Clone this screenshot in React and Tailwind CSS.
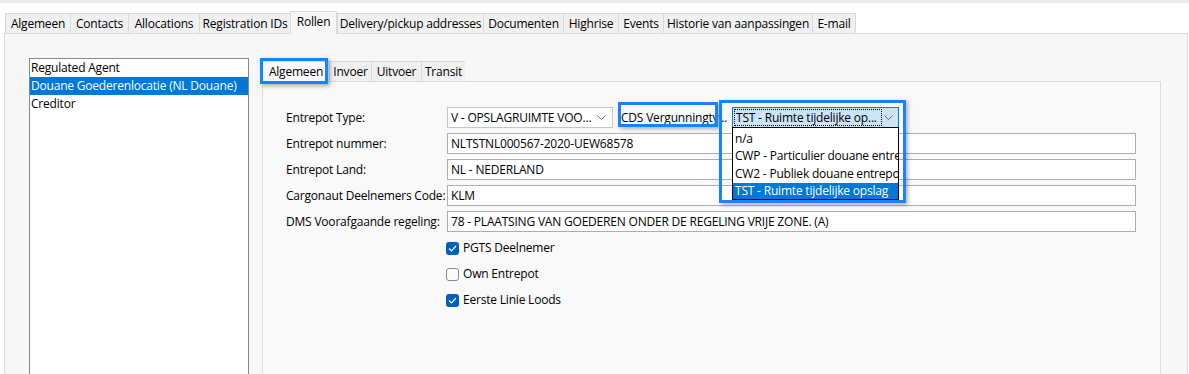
import React from 'react'

const tabs = [
  { name: 'Algemeen', w: 65 },
  { name: 'Contacts', w: 58 },
  { name: 'Allocations', w: 71 },
  { name: 'Registration IDs', w: 91 },
  { name: 'Rollen', w: 47, active: true },
  { name: 'Delivery/pickup addresses', w: 146 },
  { name: 'Documenten', w: 80 },
  { name: 'Highrise', w: 55 },
  { name: 'Events', w: 45 },
  { name: 'Historie van aanpassingen', w: 149 },
  { name: 'E-mail', w: 44 },
]

const subTabs = [
  { name: 'Algemeen', w: 67, active: true },
  { name: 'Invoer', w: 42 },
  { name: 'Uitvoer', w: 50 },
  { name: 'Transit', w: 44 },
]

const rollen = ['Regulated Agent', 'Douane Goederenlocatie (NL Douane)', 'Creditor']

const fields = [
  { label: 'Entrepot nummer:', value: 'NLTSTNL000567-2020-UEW68578' },
  { label: 'Entrepot Land:', value: 'NL - NEDERLAND' },
  { label: 'Cargonaut Deelnemers Code:', value: 'KLM' },
  { label: 'DMS Voorafgaande regeling:', value: '78 - PLAATSING VAN GOEDEREN ONDER DE REGELING VRIJE ZONE. (A)' },
]

const vergunningen = [
  'n/a',
  'CWP - Particulier douane entrepot',
  'CW2 - Publiek douane entrepot',
  'TST - Ruimte tijdelijke opslag',
]

const Chevron = () => (
  <svg width="9" height="6" viewBox="0 0 9 6" className="shrink-0">
    <polyline points="0.5,0.5 4.5,4.5 8.5,0.5" fill="none" stroke="#6b6b6b" strokeWidth="1" />
  </svg>
)

const CheckBox = ({ checked, label }) => (
  <div className="flex items-center h-[26px]">
    {checked ? (
      <div className="w-[13px] h-[13px] rounded-[3px] bg-[#005fb8] flex items-center justify-center">
        <svg width="9" height="7" viewBox="0 0 9 7">
          <polyline points="1,3.5 3.5,6 8,1" fill="none" stroke="white" strokeWidth="1.2" />
        </svg>
      </div>
    ) : (
      <div className="w-[13px] h-[13px] rounded-[3px] border border-[#8a8a8a] bg-[#fbfbfb]" />
    )}
    <span className="ml-[4px]">{label}</span>
  </div>
)

const App = () => {
  return (
    <div className="w-[1189px] h-[374px] overflow-hidden bg-white font-['Open_Sans',sans-serif] text-[12px] leading-none text-black tracking-[-0.2px]">
      <div className="h-[3px] bg-[#ececec]" />
      <div className="flex items-end h-[30px] pl-[5px]">
        {tabs.map((t, i) => (
          <div
            key={t.name}
            style={{ width: t.w }}
            className={
              t.active
                ? 'relative z-10 h-[23px] -mb-px bg-[#f7f7f7] border border-b-0 border-[#d9d9d9] flex items-start pt-[4px] justify-center whitespace-nowrap'
                : `h-[20px] bg-[#f0f0f0] border-t border-l ${i === tabs.length - 1 ? 'border-r' : ''} border-[#d9d9d9] flex items-center justify-center whitespace-nowrap`
            }
          >
            {t.name}
          </div>
        ))}
      </div>
      <div className="ml-[4px] w-[1184px] h-[400px] bg-[#f7f7f7] border border-[#dadada] flex pl-[24px] pt-[24px]">
        <div className="w-[220px] h-[400px] bg-white border border-[#828790] shrink-0">
          {rollen.map((r, i) => (
            <div
              key={r}
              className={`h-[18px] flex items-center px-[1px] whitespace-nowrap ${i === 1 ? 'bg-[#0078d7] text-white' : ''}`}
            >
              {r}
            </div>
          ))}
        </div>
        <div className="ml-[13px] pt-[3px] flex flex-col">
          <div className="relative flex h-[20px]">
            {subTabs.map((t) => (
              <div
                key={t.name}
                style={{ width: t.w }}
                className={`h-[20px] border-t border-l border-r-0 border-[#d9d9d9] flex items-center justify-center ${t.active ? 'bg-[#f9f9f9]' : 'bg-[#f0f0f0]'} last:border-r`}
              >
                {t.name}
              </div>
            ))}
            <div className="absolute left-[-2px] top-[-3px] w-[68px] h-[26px] border-[3px] border-[#1684ff] shadow-[2px_2px_4px_rgba(0,0,0,0.3)]" />
          </div>
          <div className="w-[899px] h-[300px] bg-[#f9f9f9] border border-[#dadada] pl-[23px] pt-[25px] flex flex-col gap-[5px]">
            <div className="flex items-center h-[21px]">
              <div className="w-[161px] shrink-0">Entrepot Type:</div>
              <div className="w-[166px] h-[21px] bg-white border border-[#c6c6c6] flex items-center justify-between pl-[3px] pr-[6px] whitespace-nowrap">
                <span>V - OPSLAGRUIMTE VOO...</span>
                <Chevron />
              </div>
              <div className="relative ml-[8px] w-[111px] h-[21px] flex items-center whitespace-nowrap">
                <span>CDS Vergunningty...</span>
                <div className="absolute left-[-3px] top-[-5px] w-[100px] h-[25px] border-[3px] border-[#1684ff] shadow-[2px_2px_4px_rgba(0,0,0,0.3)]" />
              </div>
              <div className="relative w-[167px] h-[21px]">
                <div className="absolute left-[-13px] top-[-7px] w-[187px] h-[103px] border-[3px] border-[#1684ff] shadow-[2px_2px_4px_rgba(0,0,0,0.3)] z-10" />
                <div className="w-full h-[21px] bg-[#cce4f7] border border-[#0078d7] flex items-center justify-between pl-[1px] pr-[5px] whitespace-nowrap">
                  <span className="border border-dotted border-black px-[1px] h-[17px] flex items-center w-[148px]">TST - Ruimte tijdelijke op...</span>
                  <Chevron />
                </div>
                <div className="absolute left-0 top-[20px] w-[167px] h-[73px] bg-white border border-black z-20 overflow-hidden pt-[2px]">
                  {vergunningen.map((v, i) => (
                    <div
                      key={v}
                      className={`h-[17.5px] flex items-center pl-[2px] whitespace-nowrap ${i === 3 ? 'bg-[#0078d7] text-white' : ''}`}
                    >
                      {v}
                    </div>
                  ))}
                </div>
              </div>
            </div>
            {fields.map((f) => (
              <div key={f.label} className="flex items-center h-[21px]">
                <div className="w-[161px] shrink-0 whitespace-nowrap">{f.label}</div>
                <div className="w-[689px] h-[21px] bg-white border border-[#adadad] flex items-center pl-[3px] whitespace-nowrap">
                  {f.value}
                </div>
              </div>
            ))}
            <div className="pl-[160px] -mt-[2px]">
              <CheckBox checked label="PGTS Deelnemer" />
              <CheckBox label="Own Entrepot" />
              <CheckBox checked label="Eerste Linie Loods" />
            </div>
          </div>
        </div>
      </div>
    </div>
  )
}

export default App
